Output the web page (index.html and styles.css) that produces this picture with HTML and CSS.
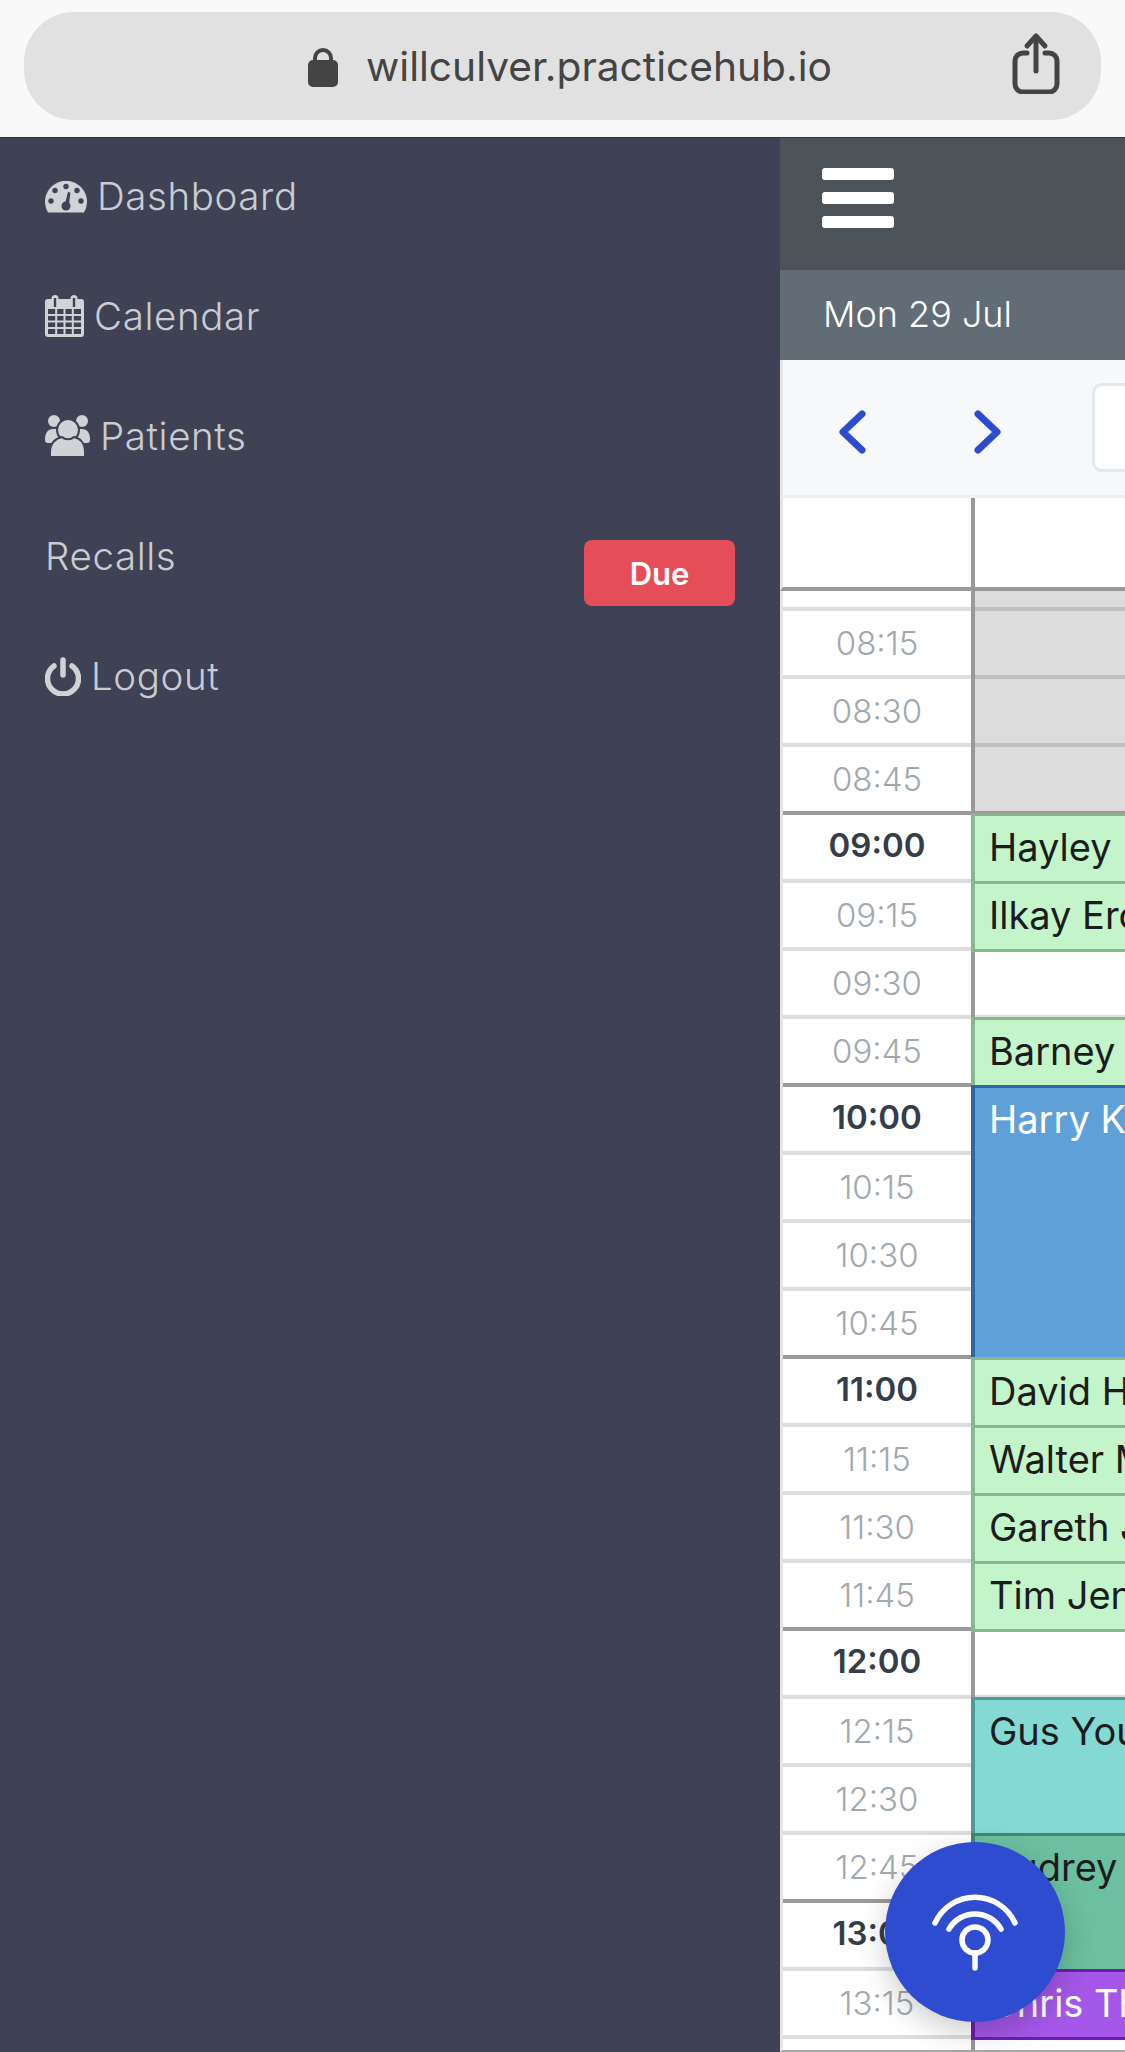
FILE: index.html
```html
<!DOCTYPE html>
<html lang="en">
<head>
    <title>Practice Hub</title>
    <link rel="stylesheet" href="styles.css">
</head>
<body>

    <div class="browserBar">
        <div class="urlPill">
            <svg class="lockIcon" viewBox="0 0 32 40" width="32" height="40">
                <path d="M8 14V10a8 8 0 0 1 16 0v4" fill="none" stroke="#444" stroke-width="4"/>
                <rect x="1" y="12" width="30" height="27" rx="5" fill="#444"/>
            </svg>
            <span class="urlText">willculver.practicehub.io</span>
            <svg class="shareIcon" viewBox="0 0 50 62" width="50" height="62">
                <g fill="none" stroke="#444" stroke-width="5" stroke-linecap="round" stroke-linejoin="round">
                    <path d="M16 21H12a8 8 0 0 0-8 8v23a8 8 0 0 0 8 8h26a8 8 0 0 0 8-8V29a8 8 0 0 0-8-8h-4"/>
                    <path d="M25 39V5"/>
                    <path d="M16 14l9-10 9 10"/>
                </g>
            </svg>
        </div>
    </div>

    <div class="app">
        <div class="sidebar">
            <div class="navItem">
                <svg class="navIcon dashIcon" viewBox="0 0 42 32" width="42" height="32">
                    <path d="M3 31.5A21 21 0 1 1 39 31.5Z" fill="#d0d2d6"/>
                    <g fill="#3f4254">
                        <circle cx="21" cy="5.5" r="2.7"/>
                        <circle cx="10" cy="9.5" r="2.7"/>
                        <circle cx="32" cy="9.5" r="2.7"/>
                        <circle cx="6" cy="20" r="2.7"/>
                        <circle cx="36" cy="20" r="2.7"/>
                        <path d="M23 11l2.4.6-1.4 12-4-1z"/>
                        <circle cx="21" cy="25" r="4.5"/>
                    </g>
                </svg>
                <span>Dashboard</span>
            </div>
            <div class="navItem">
                <svg class="navIcon" viewBox="0 0 39 42" width="39" height="42">
                    <rect x="0" y="4" width="39" height="38" rx="3" fill="#d0d2d6"/>
                    <rect x="6.5" y="0" width="7" height="12" rx="3.5" fill="#d0d2d6"/>
                    <rect x="25.5" y="0" width="7" height="12" rx="3.5" fill="#d0d2d6"/>
                    <g fill="#3f4254">
                        <rect x="8.8" y="3" width="2.4" height="9"/>
                        <rect x="27.8" y="3" width="2.4" height="9"/>
                        <rect x="3" y="14" width="33" height="25"/>
                    </g>
                    <path d="M3 20h33M3 26.5h33M3 33h33M11.2 14v25M19.5 14v25M27.8 14v25" stroke="#d0d2d6" stroke-width="2"/>
                </svg>
                <span>Calendar</span>
            </div>
            <div class="navItem">
                <svg class="navIcon" viewBox="0 0 45 42" width="45" height="42">
                    <g fill="#d0d2d6">
                        <circle cx="9" cy="6" r="6"/>
                        <circle cx="37" cy="6" r="6"/>
                        <path d="M0 24c0-6 3-10 8-10h7v14H3a3 3 0 0 1-3-3z"/>
                        <path d="M45 24c0-6-3-10-8-10h-7v14h12a3 3 0 0 0 3-3z"/>
                    </g>
                    <circle cx="23" cy="15" r="11" fill="#d0d2d6" stroke="#3f4254" stroke-width="2"/>
                    <path d="M5 42V37c0-9 6-14 12-15 3 3 9 3 12 0 6 1 11 6 11 15v5z" fill="#d0d2d6" stroke="#3f4254" stroke-width="2"/>
                </svg>
                <span>Patients</span>
            </div>
            <div class="navItem navSplit">
                <span>Recalls</span>
                <span class="dueBadge">Due</span>
            </div>
            <div class="navItem">
                <svg class="navIcon" viewBox="0 0 36 39" width="36" height="39">
                    <g fill="none" stroke="#d0d2d6" stroke-width="5.5" stroke-linecap="round">
                        <path d="M9 9a15.5 15.5 0 1 0 18 0"/>
                        <path d="M18 3v15"/>
                    </g>
                </svg>
                <span>Logout</span>
            </div>
        </div>

        <div class="main">
            <div class="topNav">
                <div class="burger"><i></i><i></i><i></i></div>
            </div>
            <div class="dateBar">Mon 29 Jul</div>
            <div class="toolBar">
                <svg class="chevron" viewBox="0 0 28 44" width="28" height="44">
                    <path d="M24 4L5 22l19 18" fill="none" stroke="#2e4cd0" stroke-width="7" stroke-linecap="round" stroke-linejoin="round"/>
                </svg>
                <svg class="chevron" viewBox="0 0 28 44" width="28" height="44">
                    <path d="M4 4l19 18L4 40" fill="none" stroke="#2e4cd0" stroke-width="7" stroke-linecap="round" stroke-linejoin="round"/>
                </svg>
                <div class="dateInput"></div>
            </div>

            <div class="gridHead">
                <div class="headTime"></div>
            </div>
            <div class="grid">
                <div class="times">
                    <div class="time timeStub"></div>
                    <div class="time">08:15</div>
                    <div class="time">08:30</div>
                    <div class="time">08:45</div>
                    <div class="time hour">09:00</div>
                    <div class="time">09:15</div>
                    <div class="time">09:30</div>
                    <div class="time">09:45</div>
                    <div class="time hour">10:00</div>
                    <div class="time">10:15</div>
                    <div class="time">10:30</div>
                    <div class="time">10:45</div>
                    <div class="time hour">11:00</div>
                    <div class="time">11:15</div>
                    <div class="time">11:30</div>
                    <div class="time">11:45</div>
                    <div class="time hour">12:00</div>
                    <div class="time">12:15</div>
                    <div class="time">12:30</div>
                    <div class="time">12:45</div>
                    <div class="time hour">13:00</div>
                    <div class="time">13:15</div>
                    <div class="time">13:30</div>
                </div>
                <div class="slots">
                    <div class="slot slotStub closed"></div>
                    <div class="slot closed"></div>
                    <div class="slot closed"></div>
                    <div class="slot closed"></div>
                    <div class="slot slotHour"><div class="appt green">Hayley</div></div>
                    <div class="slot"><div class="appt green">Ilkay Ero</div></div>
                    <div class="slot"></div>
                    <div class="slot"><div class="appt green">Barney</div></div>
                    <div class="slot slotHour span4"><div class="appt blue">Harry K</div></div>
                    <div class="slot slotHour"><div class="appt green">David H</div></div>
                    <div class="slot"><div class="appt green">Walter M</div></div>
                    <div class="slot"><div class="appt green">Gareth J</div></div>
                    <div class="slot"><div class="appt green">Tim Jen</div></div>
                    <div class="slot slotHour"></div>
                    <div class="slot span2"><div class="appt teal">Gus You</div></div>
                    <div class="slot span2"><div class="appt sea">Audrey</div></div>
                    <div class="slot"><div class="appt purple">Chris Th</div></div>
                    <div class="slot"></div>
                </div>
            </div>
        </div>
    </div>

    <div class="fab">
        <svg viewBox="0 0 180 180" width="180" height="180">
            <g fill="none" stroke="#fff" stroke-width="5.5" stroke-linecap="round">
                <path d="M50 81A44 44 0 0 1 130 81"/>
                <path d="M64 87A30 30 0 0 1 116 87"/>
                <circle cx="90" cy="98" r="13"/>
                <path d="M90 111v15"/>
            </g>
        </svg>
    </div>

</body>
</html>
```

FILE: styles.css
```css
* {
    margin: 0;
    padding: 0;
    box-sizing: border-box;
}

body {
    width: 1125px;
    height: 2052px;
    overflow: hidden;
    position: relative;
    font-family: 'Inter', sans-serif;
    font-weight: 300;
    background: #fff;
}

.browserBar {
    height: 138px;
    padding: 12px 24px 0;
    background: #f9f9f9;
    border-bottom: 1px solid #333;
}

.urlPill {
    height: 108px;
    border-radius: 50px;
    background: #e1e1e1;
    display: flex;
    align-items: center;
    padding-left: 283px;
    padding-right: 40px;
}

.lockIcon {
    margin-top: 3px;
}

.urlText {
    margin-left: 27px;
    font-size: 40.7px;
    font-weight: 400;
    color: #444;
}

.shareIcon {
    margin-left: auto;
    margin-top: -6px;
}

.app {
    display: flex;
    height: 1914px;
}

.sidebar {
    width: 780px;
    background: #3f4254;
    color: #c9ccd2;
    font-size: 38.5px;
    letter-spacing: 0.6px;
}

.navItem {
    height: 120px;
    padding: 0 45px 4px;
    display: flex;
    align-items: center;
    gap: 10px;
}

.navSplit {
    justify-content: space-between;
}

.dashIcon {
    margin-top: 2px;
}

.dueBadge {
    width: 151px;
    height: 66px;
    margin-top: 34px;
    background: #e54d58;
    border-radius: 8px;
    color: #fff;
    font-size: 31px;
    font-weight: 600;
    letter-spacing: 0;
    line-height: 67px;
    text-align: center;
}

.main {
    width: 345px;
    display: flex;
    flex-direction: column;
}

.topNav {
    height: 132px;
    background: #4c5359;
    padding: 30px 0 0 42px;
}

.burger i {
    display: block;
    width: 72px;
    height: 12px;
    margin-bottom: 12px;
    background: #fff;
    border-radius: 3px;
}

.dateBar {
    height: 90px;
    background: #626c76;
    color: #fff;
    font-size: 36px;
    line-height: 88px;
    padding-left: 43px;
}

.toolBar {
    height: 138px;
    background: #f6f8fa;
    border-left: 3px solid #e5e5e5;
    border-bottom: 3px solid #eceef0;
    display: flex;
    padding: 50px 0 0 55px;
}

.chevron {
    flex-shrink: 0;
    margin-right: 108px;
}

.dateInput {
    flex-shrink: 0;
    width: 60px;
    height: 89px;
    margin: -27px 0 0 -18px;
    background: #fff;
    border: 3px solid #e0eaee;
    border-right: 0;
    border-radius: 10px 0 0 10px;
}

.gridHead {
    height: 93px;
    border-left: 3px solid #e5e5e5;
    border-bottom: 4px solid #999;
}

.headTime {
    width: 192px;
    height: 89px;
    border-right: 4px solid #999;
}

.grid {
    flex: 1;
    min-height: 0;
    overflow: hidden;
    display: flex;
    border-left: 3px solid #e5e5e5;
    border-bottom: 2px solid #aaa;
}

.times {
    width: 192px;
    flex-shrink: 0;
    border-right: 4px solid #999;
}

.time {
    height: 68px;
    border-top: 4px solid #ddd;
    padding-bottom: 1px;
    display: flex;
    align-items: center;
    justify-content: center;
    font-size: 33px;
    color: #a2a9ae;
}

.timeStub {
    height: 16px;
    border-top: 0;
    padding: 0;
}

.hour {
    border-top-color: #999;
    padding-bottom: 5px;
    font-weight: 600;
    color: #343d49;
}

.slots {
    flex: 1;
    min-width: 0;
}

.slot {
    height: 68px;
    border-top: 4px solid #ddd;
}

.slotStub {
    height: 16px;
    border-top: 0;
}

.slotHour {
    border-top-color: #999;
}

.closed {
    background: #dcdcdc;
    border-top-color: #bfbfbf;
}

.span2 {
    height: 136px;
}

.span4 {
    height: 272px;
}

.appt {
    position: relative;
    height: 71px;
    margin: -2px 0 0 -4px;
    border: 3px solid #88b78e;
    border-left-width: 4px;
    border-right: 0;
    padding-left: 14px;
    font-size: 38px;
    font-weight: 400;
    line-height: 62px;
    white-space: nowrap;
    overflow: hidden;
    color: #1c1c1e;
}

.span2 .appt {
    height: 139px;
}

.span4 .appt {
    height: 275px;
}

.green {
    background: #c4f4c9;
    border-color: #88b78e;
}

.blue {
    background: #60a0d8;
    border-color: #2d68a5;
    color: #fff;
}

.teal {
    background: #84d9d5;
    border-color: #4b9b96;
}

.sea {
    background: #6cbfa0;
    border-color: #3e8a6c;
}

.purple {
    background: #a457e8;
    border-color: #6a1fb0;
    color: #fff;
}

.fab {
    position: absolute;
    right: 60px;
    bottom: 30px;
    width: 180px;
    height: 180px;
    border-radius: 50%;
    background: #2e4cd0;
    box-shadow: 0 10px 30px rgba(0, 0, 0, 0.2);
}
```
